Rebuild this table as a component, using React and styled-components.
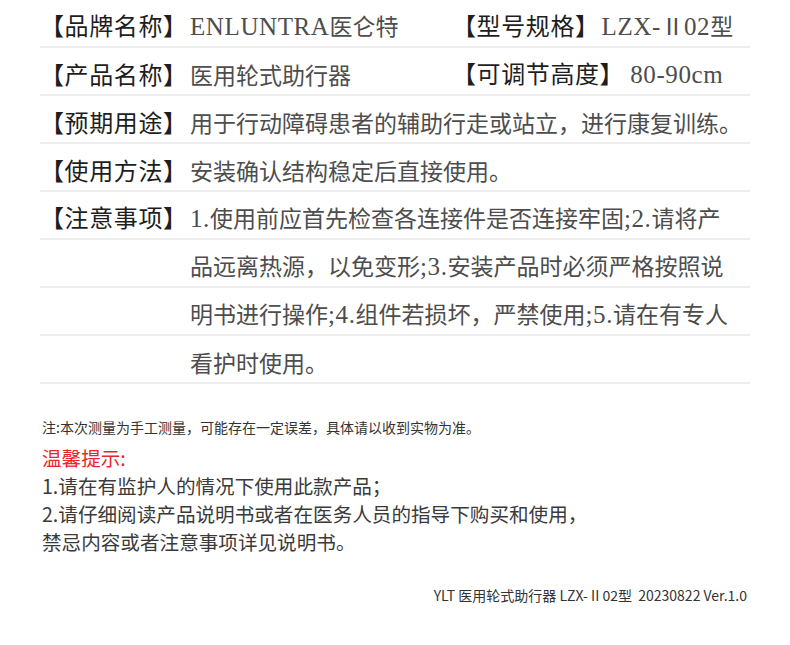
import React from "react";
import styled, { createGlobalStyle } from "styled-components";

const Global = createGlobalStyle`
  html, body { margin: 0; padding: 0; background: #ffffff; }
  body { font-family: "Noto Sans CJK SC", "Noto Sans", sans-serif; }
`;

const Page = styled.div`
  width: 710px;
  margin: 0 40px;
  font-family: "Noto Sans CJK SC", "Noto Sans", sans-serif;
`;

const Table = styled.div`
  display: flex;
  flex-direction: column;
`;

const Row = styled.div`
  display: flex;
  align-items: center;
  height: 48px;
  box-sizing: border-box;
  padding-top: 6px;
  line-height: 40px;
  border-bottom: 2px solid #eeeeee;
`;

const Cell = styled.div`
  display: flex;
  align-items: baseline;
  flex: ${(p) => (p.$w ? "none" : "1")};
  width: ${(p) => p.$w || "auto"};
`;

const Label = styled.span`
  flex: none;
  width: ${(p) => p.$w || "auto"};
  font-size: 24px;
  letter-spacing: 0.6px;
  color: #1e1e1e;
  font-weight: 400;
  white-space: nowrap;
`;

const Value = styled.span`
  font-size: 23px;
  color: #4d4d4d;
  white-space: nowrap;
  margin-left: ${(p) => p.$gap || "0"};
`;

const Lat = styled.span`
  font-family: "Liberation Serif", serif;
  font-size: 25px;
  letter-spacing: 0.6px;
`;

const Note = styled.p`
  margin: 33px 0 0 2px;
  font-size: 14px;
  line-height: 20px;
  color: #333333;
`;

const Tips = styled.div`
  margin: 7px 0 0 2px;
  font-size: 19.6px;
  line-height: 28px;
  color: #3a3a3a;
`;

const TipTitle = styled.div`
  color: #e8262b;
`;

const Footer = styled.div`
  margin-top: 29px;
  padding-right: 3px;
  text-align: right;
  font-size: 14px;
  line-height: 20px;
  color: #333333;
  white-space: pre;
`;

function Mixed({ text }) {
  const parts = text.split(/([\x20-\x7e]+)/).filter(Boolean);
  return parts.map((p, i) =>
    /^[\x20-\x7e]+$/.test(p) ? <Lat key={i}>{p}</Lat> : <React.Fragment key={i}>{p}</React.Fragment>
  );
}

const LEFT_LABEL = "150px";

export default function App() {
  const caution = [
    "1.使用前应首先检查各连接件是否连接牢固;2.请将产",
    "品远离热源，以免变形;3.安装产品时必须严格按照说",
    "明书进行操作;4.组件若损坏，严禁使用;5.请在有专人",
    "看护时使用。",
  ];
  return (
    <>
      <Global />
      <Page>
        <Table>
          <Row>
            <Cell $w="412px">
              <Label $w={LEFT_LABEL}>【品牌名称】</Label>
              <Value><Mixed text="ENLUNTRA医仑特" /></Value>
            </Cell>
            <Cell>
              <Label>【型号规格】</Label>
              <Value $gap="2px"><Mixed text="LZX-Ⅱ02型" /></Value>
            </Cell>
          </Row>
          <Row>
            <Cell $w="412px">
              <Label $w={LEFT_LABEL}>【产品名称】</Label>
              <Value>医用轮式助行器</Value>
            </Cell>
            <Cell>
              <Label>【可调节高度】</Label>
              <Value $gap="6px"><Mixed text="80-90cm" /></Value>
            </Cell>
          </Row>
          <Row>
            <Cell>
              <Label $w={LEFT_LABEL}>【预期用途】</Label>
              <Value>用于行动障碍患者的辅助行走或站立，进行康复训练。</Value>
            </Cell>
          </Row>
          <Row>
            <Cell>
              <Label $w={LEFT_LABEL}>【使用方法】</Label>
              <Value>安装确认结构稳定后直接使用。</Value>
            </Cell>
          </Row>
          {caution.map((line, i) => (
            <Row key={i}>
              <Cell>
                <Label $w={LEFT_LABEL}>{i === 0 ? "【注意事项】" : ""}</Label>
                <Value><Mixed text={line} /></Value>
              </Cell>
            </Row>
          ))}
        </Table>
        <Note>注:本次测量为手工测量，可能存在一定误差，具体请以收到实物为准。</Note>
        <Tips>
          <TipTitle>温馨提示:</TipTitle>
          <div>1.请在有监护人的情况下使用此款产品；</div>
          <div>2.请仔细阅读产品说明书或者在医务人员的指导下购买和使用，</div>
          <div>禁忌内容或者注意事项详见说明书。</div>
        </Tips>
        <Footer>{"YLT 医用轮式助行器 LZX- II 02型  20230822 Ver.1.0"}</Footer>
      </Page>
    </>
  );
}
